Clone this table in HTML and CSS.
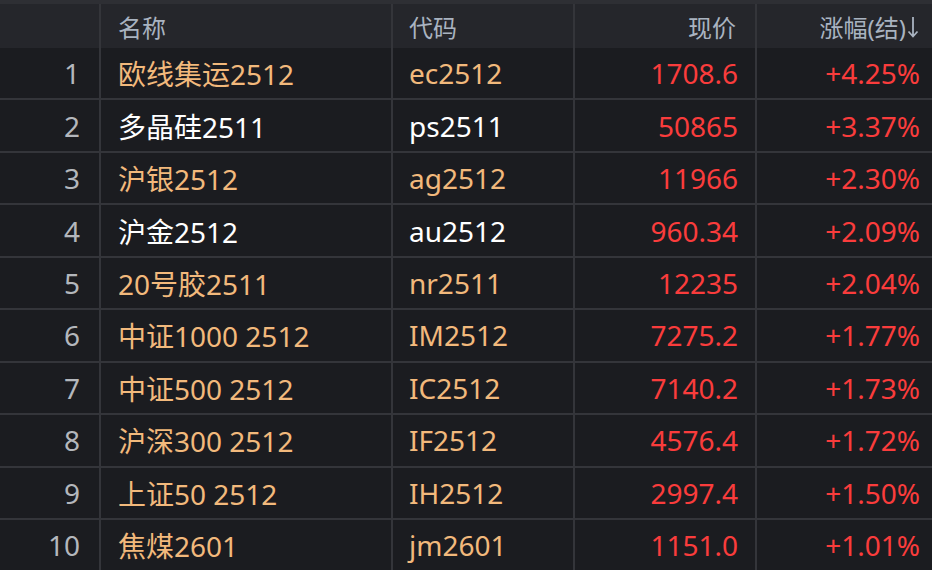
FILE: index.html
```html
<!DOCTYPE html>
<html lang="zh-CN">
<head>
<meta charset="utf-8">
<title>涨幅榜</title>
<link rel="stylesheet" href="styles.css">
</head>
<body>
<div class="topstrip"></div>
<div class="table">
  <div class="row head">
    <div class="cell rank"></div>
    <div class="cell name">名称</div>
    <div class="cell code">代码</div>
    <div class="cell price">现价</div>
    <div class="cell chg">涨幅(结)<svg class="arrow" width="12" height="22" viewBox="0 0 12 22"><path d="M6 1V20M1.5 15.5L6 20.5L10.5 15.5" fill="none" stroke="currentColor" stroke-width="1.8"/></svg></div>
  </div>
  <div class="row orange">
    <div class="cell rank">1</div>
    <div class="cell name">欧线集运2512</div>
    <div class="cell code">ec2512</div>
    <div class="cell price">1708.6</div>
    <div class="cell chg">+4.25%</div>
  </div>
  <div class="row white">
    <div class="cell rank">2</div>
    <div class="cell name">多晶硅2511</div>
    <div class="cell code">ps2511</div>
    <div class="cell price">50865</div>
    <div class="cell chg">+3.37%</div>
  </div>
  <div class="row orange">
    <div class="cell rank">3</div>
    <div class="cell name">沪银2512</div>
    <div class="cell code">ag2512</div>
    <div class="cell price">11966</div>
    <div class="cell chg">+2.30%</div>
  </div>
  <div class="row white">
    <div class="cell rank">4</div>
    <div class="cell name">沪金2512</div>
    <div class="cell code">au2512</div>
    <div class="cell price">960.34</div>
    <div class="cell chg">+2.09%</div>
  </div>
  <div class="row orange">
    <div class="cell rank">5</div>
    <div class="cell name">20号胶2511</div>
    <div class="cell code">nr2511</div>
    <div class="cell price">12235</div>
    <div class="cell chg">+2.04%</div>
  </div>
  <div class="row orange">
    <div class="cell rank">6</div>
    <div class="cell name">中证1000 2512</div>
    <div class="cell code">IM2512</div>
    <div class="cell price">7275.2</div>
    <div class="cell chg">+1.77%</div>
  </div>
  <div class="row orange">
    <div class="cell rank">7</div>
    <div class="cell name">中证500 2512</div>
    <div class="cell code">IC2512</div>
    <div class="cell price">7140.2</div>
    <div class="cell chg">+1.73%</div>
  </div>
  <div class="row orange">
    <div class="cell rank">8</div>
    <div class="cell name">沪深300 2512</div>
    <div class="cell code">IF2512</div>
    <div class="cell price">4576.4</div>
    <div class="cell chg">+1.72%</div>
  </div>
  <div class="row orange">
    <div class="cell rank">9</div>
    <div class="cell name">上证50 2512</div>
    <div class="cell code">IH2512</div>
    <div class="cell price">2997.4</div>
    <div class="cell chg">+1.50%</div>
  </div>
  <div class="row orange">
    <div class="cell rank">10</div>
    <div class="cell name">焦煤2601</div>
    <div class="cell code">jm2601</div>
    <div class="cell price">1151.0</div>
    <div class="cell chg">+1.01%</div>
  </div>
</div>
</body>
</html>
```
FILE: styles.css
```css
html, body {
  margin: 0;
  padding: 0;
  background: #1b1c20;
  width: 932px;
  height: 570px;
  overflow: hidden;
  font-family: "Noto Sans", "Noto Sans CJK SC", sans-serif;
}

.topstrip {
  height: 4px;
  background: #2e2f34;
}

.table {
  display: flex;
  flex-direction: column;
}

.row {
  display: grid;
  grid-template-columns: 99px 292px 182px 182px 177px;
  height: 52.44px;
  box-sizing: border-box;
  border-bottom: 2px solid #34353a;
  font-size: 28px;
}

.row.head {
  height: 44px;
  border-bottom: none;
  background: #25262b;
  font-size: 24px;
  color: #a9b3c0;
}

.cell {
  display: flex;
  align-items: center;
  white-space: nowrap;
  box-sizing: border-box;
}

.cell + .cell {
  border-left: 2px solid #34353a;
}

.rank {
  justify-content: flex-end;
  padding-right: 19px;
  color: #b4b7bc;
}

.name {
  padding-left: 17px;
}

.code {
  padding-left: 16px;
}

.price {
  justify-content: flex-end;
  padding-right: 17px;
}

.chg {
  justify-content: flex-end;
  padding-right: 12px;
}

.head .price { padding-right: 19px; }
.head .chg { padding-right: 13px; }

.arrow {
  margin-left: 1px;
  margin-top: 2px;
  flex: none;
}

.row.orange .name, .row.orange .code { color: #f2b97c; }
.row.white .name, .row.white .code { color: #ffffff; }
.row:not(.head) .price, .row:not(.head) .chg { color: #fa3c3c; }
```
